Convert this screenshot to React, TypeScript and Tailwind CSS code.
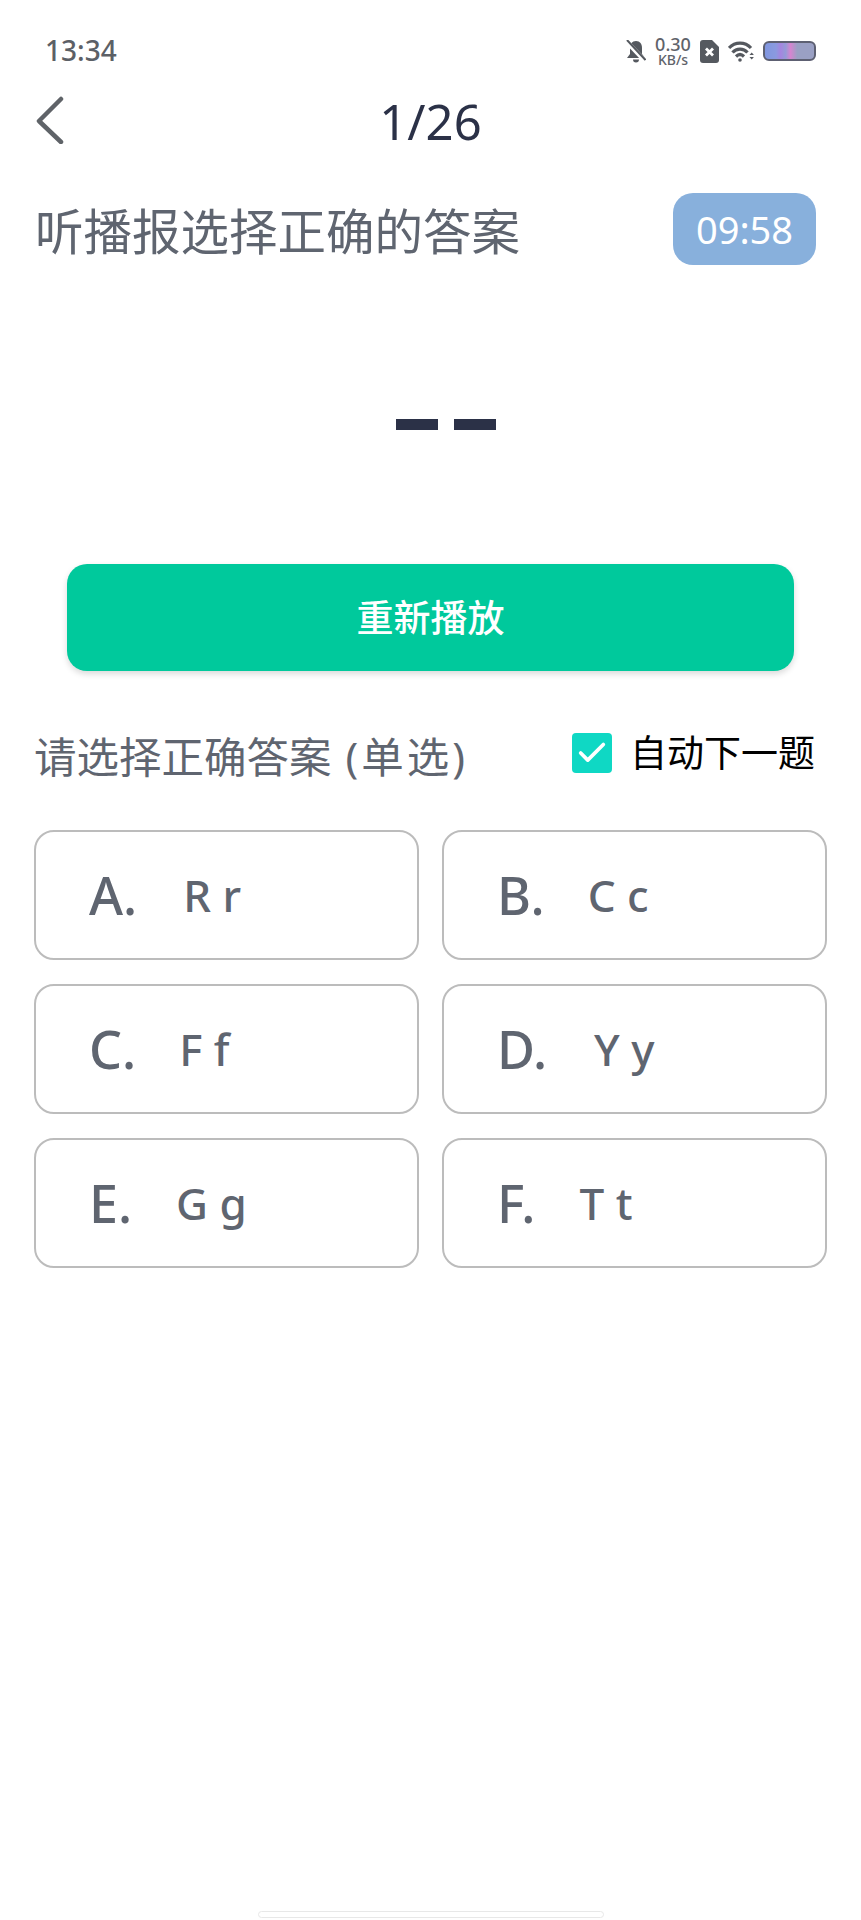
import { Check } from 'lucide-react';

const options = [
  { key: 'A.', value: 'R r', gap: 'ml-[46px]' },
  { key: 'B.', value: 'C c', gap: 'ml-[43px]' },
  { key: 'C.', value: 'F f', gap: 'ml-[43px]' },
  { key: 'D.', value: 'Y y', gap: 'ml-[47px]' },
  { key: 'E.', value: 'G g', gap: 'ml-[44px]' },
  { key: 'F.', value: 'T t', gap: 'ml-[44px]' },
];

function StatusIcons() {
  return (
    <div className="flex items-center gap-[9px]">
      <svg width="20" height="23" viewBox="0 0 20 23">
        <path d="M10 1C6 1 4 4 4 8v6l-3 4h18l-3-4V8c0-4-2-7-6-7zM7 19.500a3 3 0 0 0 6 0z" fill="#55595f" />
        <path d="M0 1l20 21" stroke="#fff" strokeWidth="4.500" />
        <path d="M1 0l18.500 20" stroke="#55595f" strokeWidth="2" />
      </svg>
      <div className="flex w-[36px] flex-col items-center font-medium text-[#5f636a]">
        <span className="text-[18px] leading-[17px]">0.30</span>
        <span className="text-[14px] leading-[14px]">KB/s</span>
      </div>
      <svg width="19" height="23" viewBox="0 0 19 23">
        <path d="M3 0h9l7 7v13a3 3 0 0 1-3 3H3a3 3 0 0 1-3-3V3a3 3 0 0 1 3-3z" fill="#55595f" />
        <path d="M6 8.500l7 7M13 8.500l-7 7" stroke="#fff" strokeWidth="2.800" />
      </svg>
      <svg width="26" height="21" viewBox="0 0 26 21" fill="none" stroke="#55595f" strokeWidth="3.200">
        <path d="M1 7c6-6.500 16-6.500 22 0" />
        <path d="M4.500 11.500c4-4.500 11-4.500 15 0" />
        <path d="M8 15.500c2.500-2.500 5.500-2.500 8 0" />
        <circle cx="12" cy="19" r="1.800" fill="#55595f" stroke="none" />
        <path d="M21.500 14l2.200-2.500 2.200 2.500zM21.500 16l2.200 2.500 2.200-2.500z" fill="#55595f" stroke="none" />
      </svg>
      <div className="h-[20px] w-[53px] rounded-[6px] border-2 border-[#5d6072] bg-[linear-gradient(90deg,#8096e0_0%,#8a9ae0_22%,#a585e0_32%,#959ad8_42%,#d585d0_52%,#9aa0c4_66%,#9aa0c4_100%)]" />
    </div>
  );
}

export default function App() {
  return (
    <div className='flex min-h-[1920px] flex-col bg-white font-["Noto_Sans","Noto_Sans_CJK_SC",sans-serif]'>
      <div className="flex h-[80px] items-center justify-between pl-[45px] pr-[45px] pt-[22px]">
        <span className="mb-[2px] text-[28px] font-medium text-[#5c6066]">13:34</span>
        <StatusIcons />
      </div>

      <div className="relative mt-[12px] flex h-[60px] items-center justify-center">
        <svg className="absolute left-[35px] top-[4px]" width="30" height="48" viewBox="0 0 30 48" fill="none">
          <path d="M26 3L4 25l22 21" stroke="#5f6368" strokeWidth="4.500" strokeLinecap="round" strokeLinejoin="round" />
        </svg>
        <span className="text-[49px] text-[#2b3147]">1/26</span>
      </div>

      <div className="mt-[41px] flex items-center justify-between pl-[35px] pr-[45px]">
        <span className="mt-[3px] text-[48.500px] leading-[60px] text-[#5f6570]">听播报选择正确的答案</span>
        <div className="flex h-[72px] w-[143px] items-center justify-center rounded-[20px] bg-[#88b0dc] text-[38px] text-white">
          09:58
        </div>
      </div>

      <div className="mt-[154px] flex justify-center gap-[16px] pl-[30px]">
        <div className="h-[11px] w-[42px] bg-[#2b3147]" />
        <div className="h-[11px] w-[42px] bg-[#2b3147]" />
      </div>

      <button className="mx-[67px] mt-[134px] h-[107px] rounded-[20px] bg-[#00c99c] text-[37px] font-medium text-white shadow-[0_3px_6px_rgba(0,0,0,0.15)]">
        重新播放
      </button>

      <div className="mt-[56px] flex items-center justify-between pl-[34px] pr-[46px]">
        <span className="text-[42.500px] leading-[60px] text-[#5f6570]">
          请选择正确答案<span className="ml-[14px] tracking-[3px]">(单选)</span>
        </span>
        <div className="mb-[9px] flex items-center gap-[18px]">
          <div className="flex h-[40px] w-[40px] items-center justify-center rounded-[4px] bg-[#0fd8c4]">
            <Check size={34} strokeWidth={2.6} color="#fff" />
          </div>
          <span className="text-[37px] leading-[50px] text-black">自动下一题</span>
        </div>
      </div>

      <div className="mt-[43px] grid grid-cols-2 gap-x-[23px] gap-y-[24px] px-[34px]">
        {options.map((o) => (
          <div key={o.key} className="flex h-[130px] items-center rounded-[20px] border-2 border-[#bcbcbc] pl-[53px] font-medium text-[#5f6570]">
            <span className="text-[52px]">{o.key}</span>
            <span className={`text-[44px] ${o.gap}`}>{o.value}</span>
          </div>
        ))}
      </div>

      <div className="mx-auto mb-[2px] mt-auto h-[7px] w-[346px] rounded-full border border-[#e8e8e8]" />
    </div>
  );
}
